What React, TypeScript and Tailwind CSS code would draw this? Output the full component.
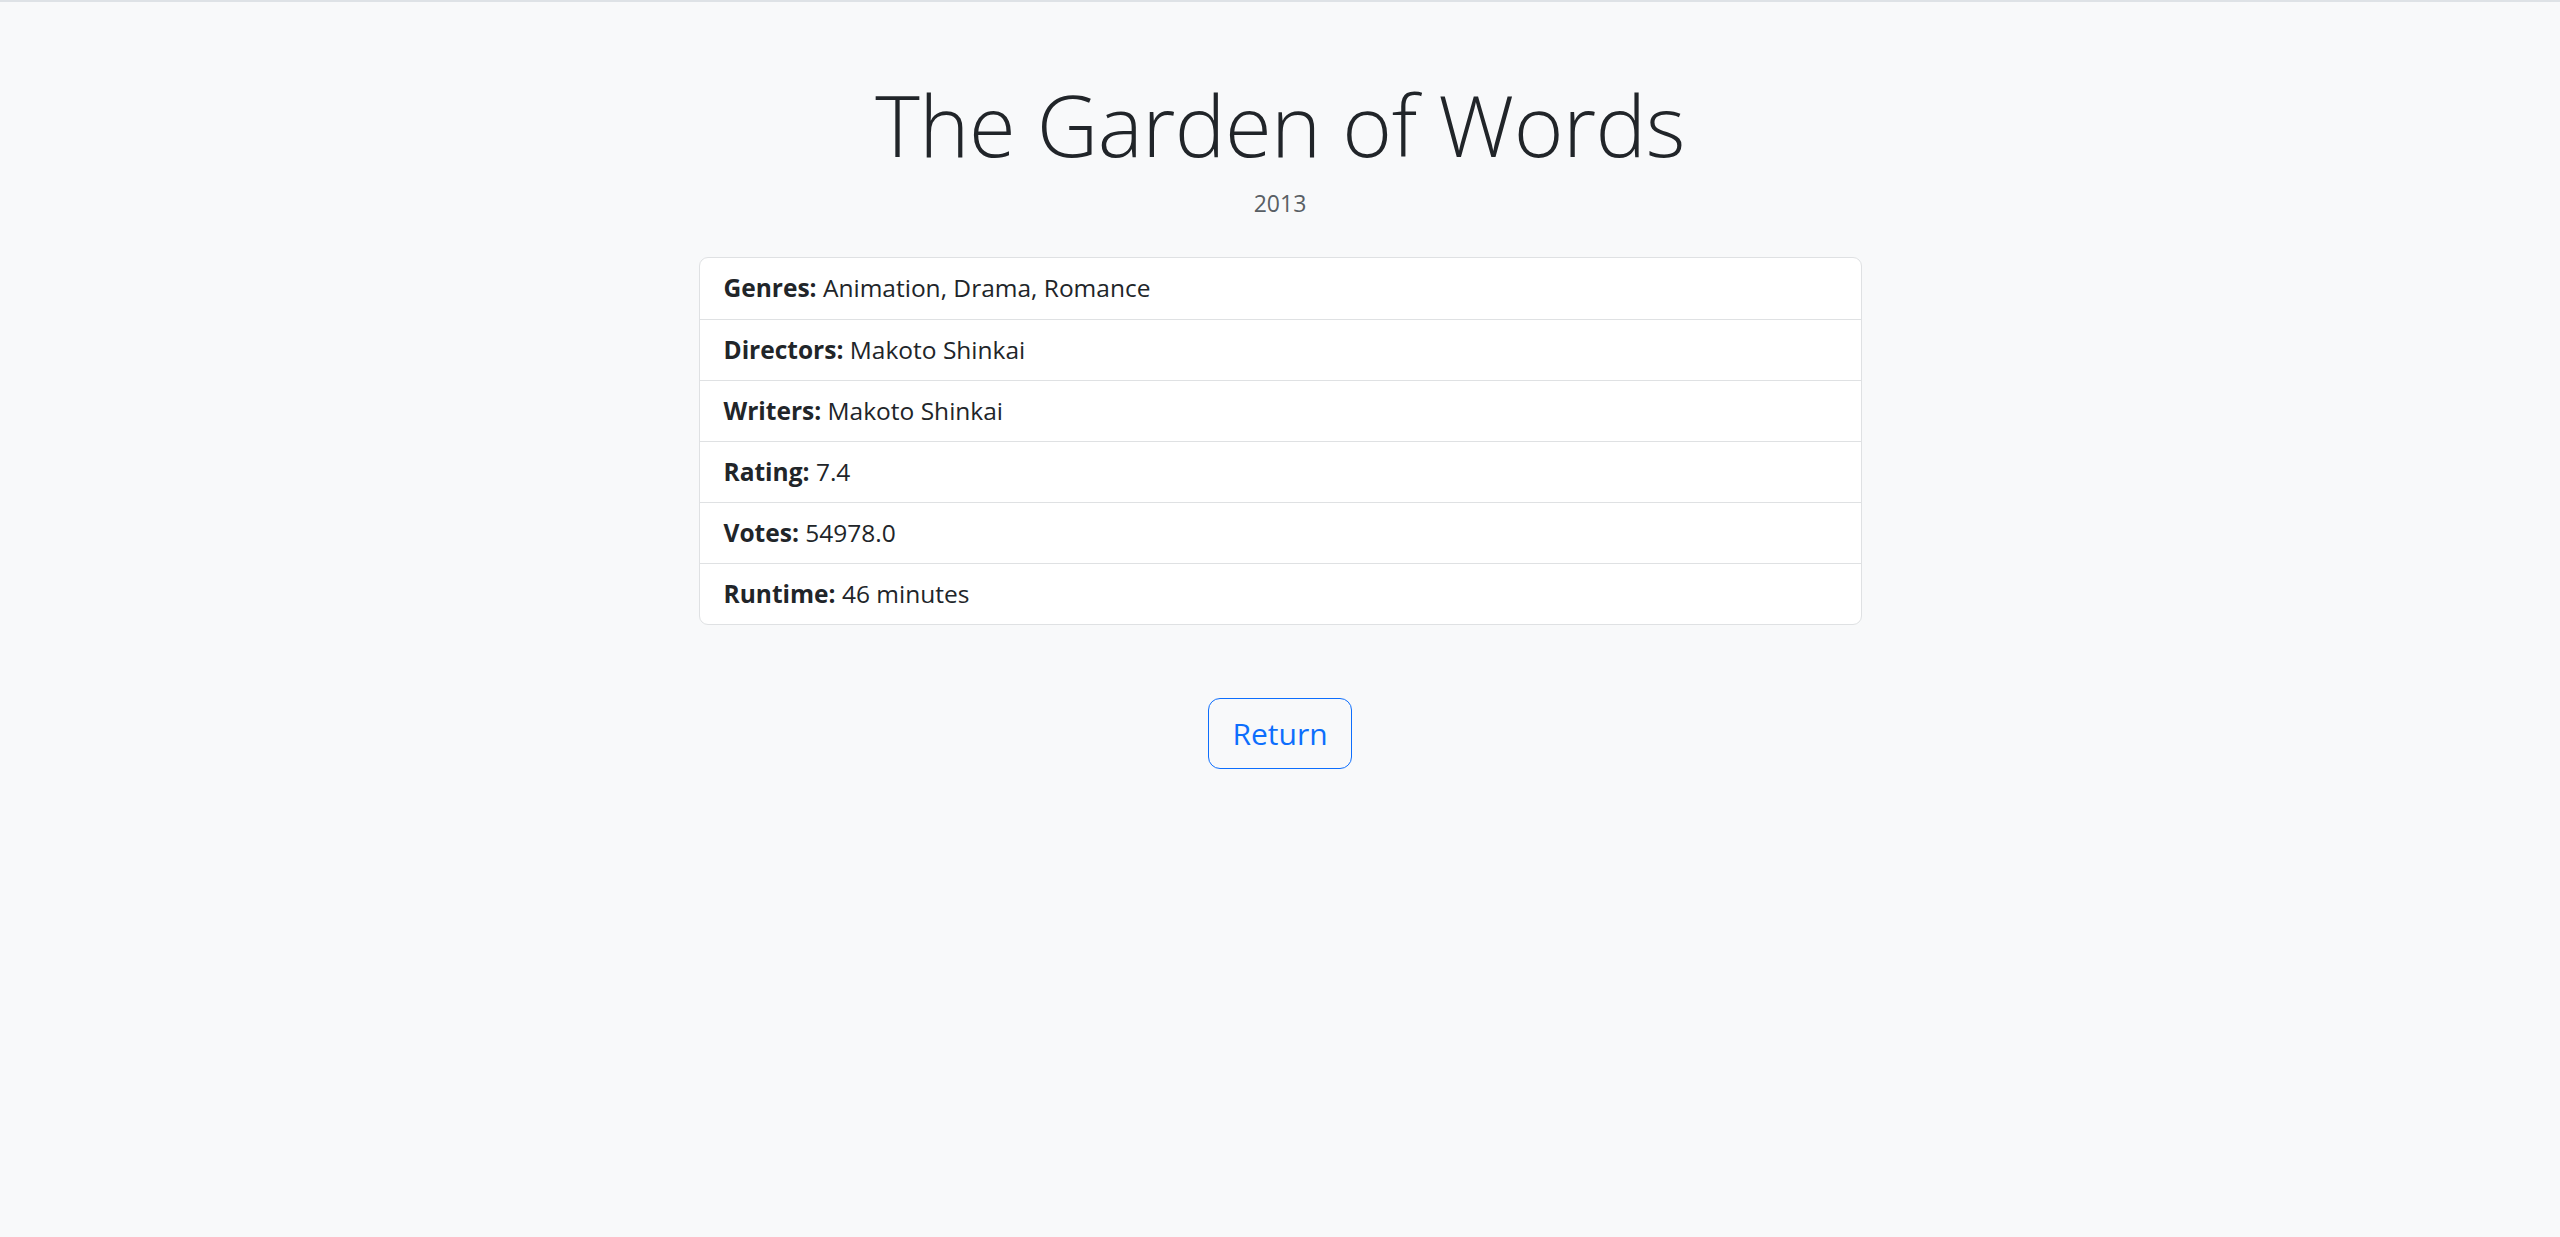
import React from "react";

const rows: [string, string][] = [
  ["Genres:", "Animation, Drama, Romance"],
  ["Directors:", "Makoto Shinkai"],
  ["Writers:", "Makoto Shinkai"],
  ["Rating:", "7.4"],
  ["Votes:", "54978.0"],
  ["Runtime:", "46 minutes"],
];

export default function App() {
  return (
    <div
      className="min-h-screen bg-[#f8f9fa] border-t-2 border-[#dee2e6] text-[#212529]"
      style={{ fontFamily: '"Open Sans", "Noto Sans", sans-serif' }}
    >
      <div className="flex flex-col items-center">
        <h1 className="mt-[71px] text-[85px] font-light leading-[1.2] tracking-[-0.5px]">
          The Garden of Words
        </h1>
        <p className="mt-[10px] text-[23px] leading-[36px] text-[#595f64]">2013</p>
        <ul className="mt-[36px] w-[1163px] bg-white border border-[#dfe1e3] rounded-[9px] overflow-hidden">
          {rows.map(([k, v], i) => (
            <li
              key={k}
              className={`px-[24px] h-[61px] flex items-center text-[24.5px] ${
                i > 0 ? "border-t border-[#dfe1e3]" : ""
              }`}
            >
              <span className="font-bold">{k}</span>
              <span>&nbsp;{v}</span>
            </li>
          ))}
        </ul>
        <button className="mt-[73px] h-[71px] px-[23px] border border-[#0d6efd] rounded-[12px] text-[#0d6efd] text-[30px]">
          Return
        </button>
      </div>
    </div>
  );
}
